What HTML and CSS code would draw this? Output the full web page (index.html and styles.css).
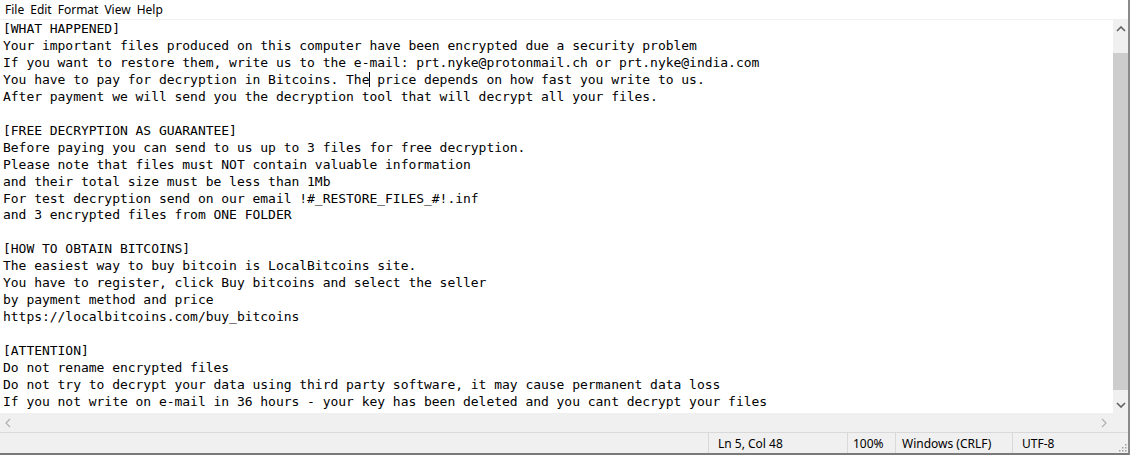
FILE: index.html
```html
<!DOCTYPE html>
<html>
<head>
<meta charset="utf-8">
<link rel="stylesheet" href="styles.css">
</head>
<body>
<div class="window">
  <div class="menubar">
    <span class="menu-item">File</span>
    <span class="menu-item">Edit</span>
    <span class="menu-item">Format</span>
    <span class="menu-item">View</span>
    <span class="menu-item">Help</span>
  </div>
  <div class="main">
    <pre class="editor">[WHAT HAPPENED]
Your important files produced on this computer have been encrypted due a security problem
If you want to restore them, write us to the e-mail: prt.nyke@protonmail.ch or prt.nyke@india.com
You have to pay for decryption in Bitcoins. The<span class="caret"></span> price depends on how fast you write to us.
After payment we will send you the decryption tool that will decrypt all your files.

[FREE DECRYPTION AS GUARANTEE]
Before paying you can send to us up to 3 files for free decryption.
Please note that files must NOT contain valuable information
and their total size must be less than 1Mb
For test decryption send on our email !#_RESTORE_FILES_#!.inf
and 3 encrypted files from ONE FOLDER

[HOW TO OBTAIN BITCOINS]
The easiest way to buy bitcoin is LocalBitcoins site.
You have to register, click Buy bitcoins and select the seller
by payment method and price
https://localbitcoins.com/buy_bitcoins

[ATTENTION]
Do not rename encrypted files
Do not try to decrypt your data using third party software, it may cause permanent data loss
If you not write on e-mail in 36 hours - your key has been deleted and you cant decrypt your files</pre>
    <div class="vscroll">
      <div class="arrow-box">
        <svg width="10" height="6" viewBox="0 0 10 6"><path d="M1 5 L5 1 L9 5" fill="none" stroke="#606060" stroke-width="1.6"/></svg>
      </div>
      <div class="vtrack"><div class="vthumb"></div></div>
      <div class="arrow-box">
        <svg width="10" height="6" viewBox="0 0 10 6"><path d="M1 1 L5 5 L9 1" fill="none" stroke="#606060" stroke-width="1.6"/></svg>
      </div>
    </div>
  </div>
  <div class="hrow">
    <div class="hscroll">
      <div class="harrow">
        <svg width="6" height="10" viewBox="0 0 6 10"><path d="M5 1 L1 5 L5 9" fill="none" stroke="#b0b0b0" stroke-width="1.2"/></svg>
      </div>
      <div class="harrow">
        <svg width="6" height="10" viewBox="0 0 6 10"><path d="M1 1 L5 5 L1 9" fill="none" stroke="#b0b0b0" stroke-width="1.2"/></svg>
      </div>
    </div>
    <div class="corner"></div>
  </div>
  <div class="status">
    <div class="cell cell-spacer"></div>
    <div class="cell cell-pos">Ln 5, Col 48</div>
    <div class="cell cell-zoom">100%</div>
    <div class="cell cell-eol">Windows (CRLF)</div>
    <div class="cell cell-enc">UTF-8</div>
    <div class="grip">
      <svg width="8" height="8" viewBox="0 0 8 8" fill="#a0a0a0"><rect x="6" y="0" width="1.5" height="1.5"/><rect x="3" y="3" width="1.5" height="1.5"/><rect x="6" y="3" width="1.5" height="1.5"/><rect x="0" y="6" width="1.5" height="1.5"/><rect x="3" y="6" width="1.5" height="1.5"/><rect x="6" y="6" width="1.5" height="1.5"/></svg>
    </div>
  </div>
</div>
</body>
</html>
```
FILE: styles.css
```css
* { box-sizing: border-box; }
html, body { margin: 0; padding: 0; background: #ffffff; }
.window {
  width: 1130px;
  height: 455px;
  display: flex;
  flex-direction: column;
  border-right: 2px solid #8a8a8a;
  border-bottom: 2px solid #7a7a7a;
  overflow: hidden;
}
.menubar {
  height: 20px;
  display: flex;
  align-items: center;
  padding-left: 5px;
  font-family: "Noto Sans", "Open Sans", sans-serif;
  font-size: 12px;
  color: #000;
  border-bottom: 1px solid #f0f0f0;
}
.menu-item { margin-right: 6px; }
.main {
  height: 393px;
  display: flex;
}
.editor {
  flex: 1;
  margin: 0;
  padding: 1px 0 0 3px;
  font-family: "DejaVu Sans Mono", "Liberation Mono", monospace;
  font-size: 13px;
  line-height: 16.95px;
  color: #000;
  white-space: pre;
  overflow: hidden;
  letter-spacing: -0.03px;
}
.caret {
  display: inline-block;
  width: 0;
  height: 15px;
  margin-right: -1px;
  border-left: 1px solid #000;
  vertical-align: -3px;
}
.vscroll {
  width: 15px;
  background: #f0f0f0;
  display: flex;
  flex-direction: column;
}
.arrow-box {
  height: 17px;
  display: flex;
  align-items: center;
  justify-content: center;
}
.vtrack {
  flex: 1;
  padding: 16px 0 0 0;
  display: flex;
  flex-direction: column;
}
.vthumb {
  flex: 1;
  margin: 0 0 6px 0;
  background: #cdcdcd;
}
.hrow {
  height: 19px;
  display: flex;
}
.hscroll {
  flex: 1;
  background: #f0f0f0;
  display: flex;
  justify-content: space-between;
  align-items: center;
  padding: 0 6px 0 5px;
}
.harrow { display: flex; align-items: center; }
.corner { width: 15px; background: #f0f0f0; }
.status {
  flex: 1;
  display: flex;
  background: #f0f0f0;
  border-top: 1px solid #d9d9d9;
  font-family: "Noto Sans", "Open Sans", sans-serif;
  font-size: 12px;
  color: #000;
  align-items: stretch;
}
.cell {
  display: flex;
  align-items: center;
  border-left: 1px solid #d9d9d9;
  padding-left: 9px;
}
.cell-spacer { width: 708px; border-left: none; padding: 0; }
.cell-pos { width: 139px; }
.cell-zoom { width: 48px; padding-left: 5px; }
.cell-eol { width: 117px; padding-left: 6px; }
.cell-enc { flex: 1; padding-left: 9px; }
.grip {
  width: 12px;
  display: flex;
  align-items: flex-end;
  justify-content: flex-end;
  padding: 0 1px 1px 0;
}
```
